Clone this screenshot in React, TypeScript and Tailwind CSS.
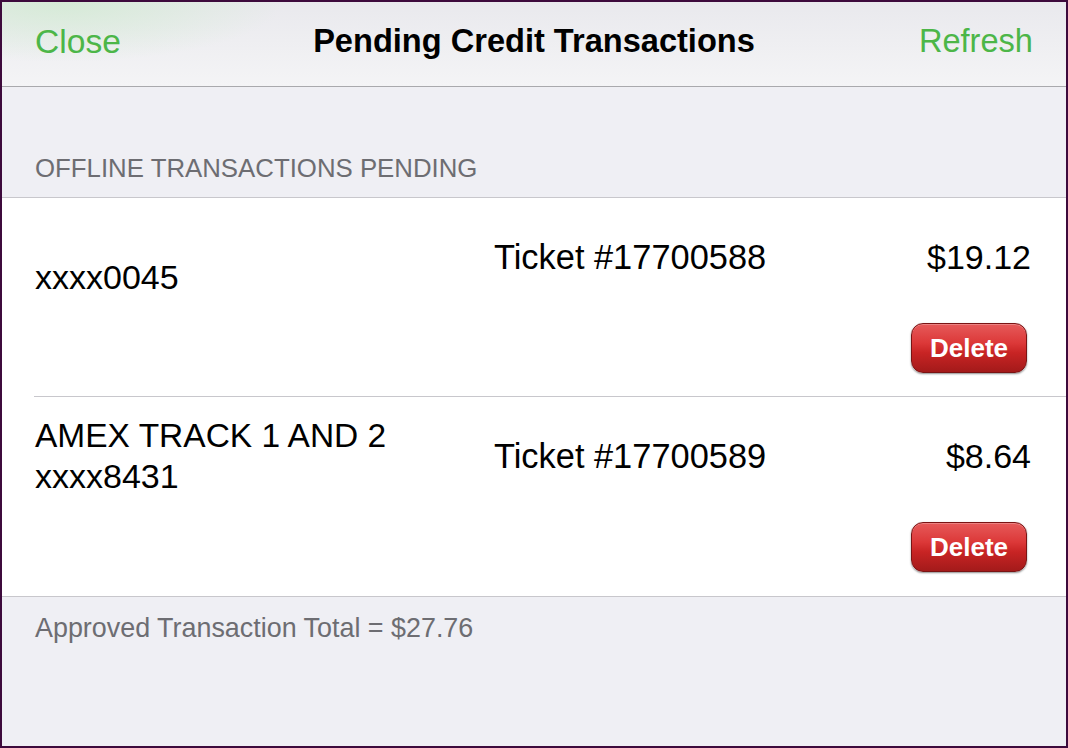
import React from "react";

const font = { fontFamily: '"Liberation Sans", Arial, Helvetica, sans-serif' };

function DeleteButton() {
  return (
    <button className="h-[50px] w-[116px] rounded-[12px] border border-[#7a1414] bg-[linear-gradient(to_bottom,#e65a5a_0%,#dc3838_40%,#c82424_60%,#a31a1a_100%)] shadow-[0_1px_2px_rgba(0,0,0,0.45),inset_0_1px_0_rgba(255,255,255,0.25)] text-[26px] font-bold leading-none text-white">
      Delete
    </button>
  );
}

function Row({
  name,
  card,
  ticket,
  amount,
  height,
  inset,
}: {
  name: string;
  card: string;
  ticket: string;
  amount: string;
  height: string;
  inset: boolean;
}) {
  return (
    <div className={inset ? "bg-white pl-[32px]" : "bg-white"}>
      <div
        className={
          (inset ? "pl-[1px] border-b border-[#c8c7cc] " : "pl-[33px] border-b border-[#c8c7cc] ") +
          height +
          " flex flex-col pr-[35px] pt-[19px]"
        }
      >
        <div className="flex text-[34px] leading-[40px] text-black">
          <div className="w-[459px]">
            <div className="h-[40px] whitespace-nowrap text-[33.5px]">{name}</div>
            <div className="h-[40px]">{card}</div>
          </div>
          <div className="flex flex-1 items-center text-[34.4px]">{ticket}</div>
          <div className="flex items-center">{amount}</div>
        </div>
        <div className="mt-[26px] flex justify-end pr-[4px]">
          <DeleteButton />
        </div>
      </div>
    </div>
  );
}

export default function App() {
  return (
    <div
      style={font}
      className="flex h-[748px] w-[1068px] flex-col border-2 border-[#3d0a3c] bg-[#efeff4]"
    >
      <div className="grid h-[85px] grid-cols-[1fr_auto_1fr] items-center border-b border-[#a9a9ad] bg-[radial-gradient(ellipse_220px_60px_at_60px_0px,rgba(205,235,205,0.7),rgba(205,235,205,0)),linear-gradient(to_bottom,#e9e9ed,#f4f4f6)] px-[33px] pb-[5px]">
        <span className="justify-self-start text-[33.6px] leading-none text-[#4cb648]">Close</span>
        <span className="text-[32.6px] font-bold leading-none text-black">
          Pending Credit Transactions
        </span>
        <span className="justify-self-end text-[32.6px] leading-none text-[#4cb648]">Refresh</span>
      </div>
      <div className="h-[111px] border-b border-[#c8c7cc] pl-[33px] pt-[68px] text-[25.8px] leading-[26px] text-[#6d6d72]">
        OFFLINE TRANSACTIONS PENDING
      </div>
      <Row
        name=""
        card="xxxx0045"
        ticket="Ticket #17700588"
        amount="$19.12"
        height="h-[199px]"
        inset={true}
      />
      <Row
        name="AMEX TRACK 1 AND 2"
        card="xxxx8431"
        ticket="Ticket #17700589"
        amount="$8.64"
        height="h-[200px]"
        inset={false}
      />
      <div className="pl-[33px] pt-[18px] text-[26.9px] leading-[26px] text-[#6d6d72]">
        Approved Transaction Total = $27.76
      </div>
    </div>
  );
}
